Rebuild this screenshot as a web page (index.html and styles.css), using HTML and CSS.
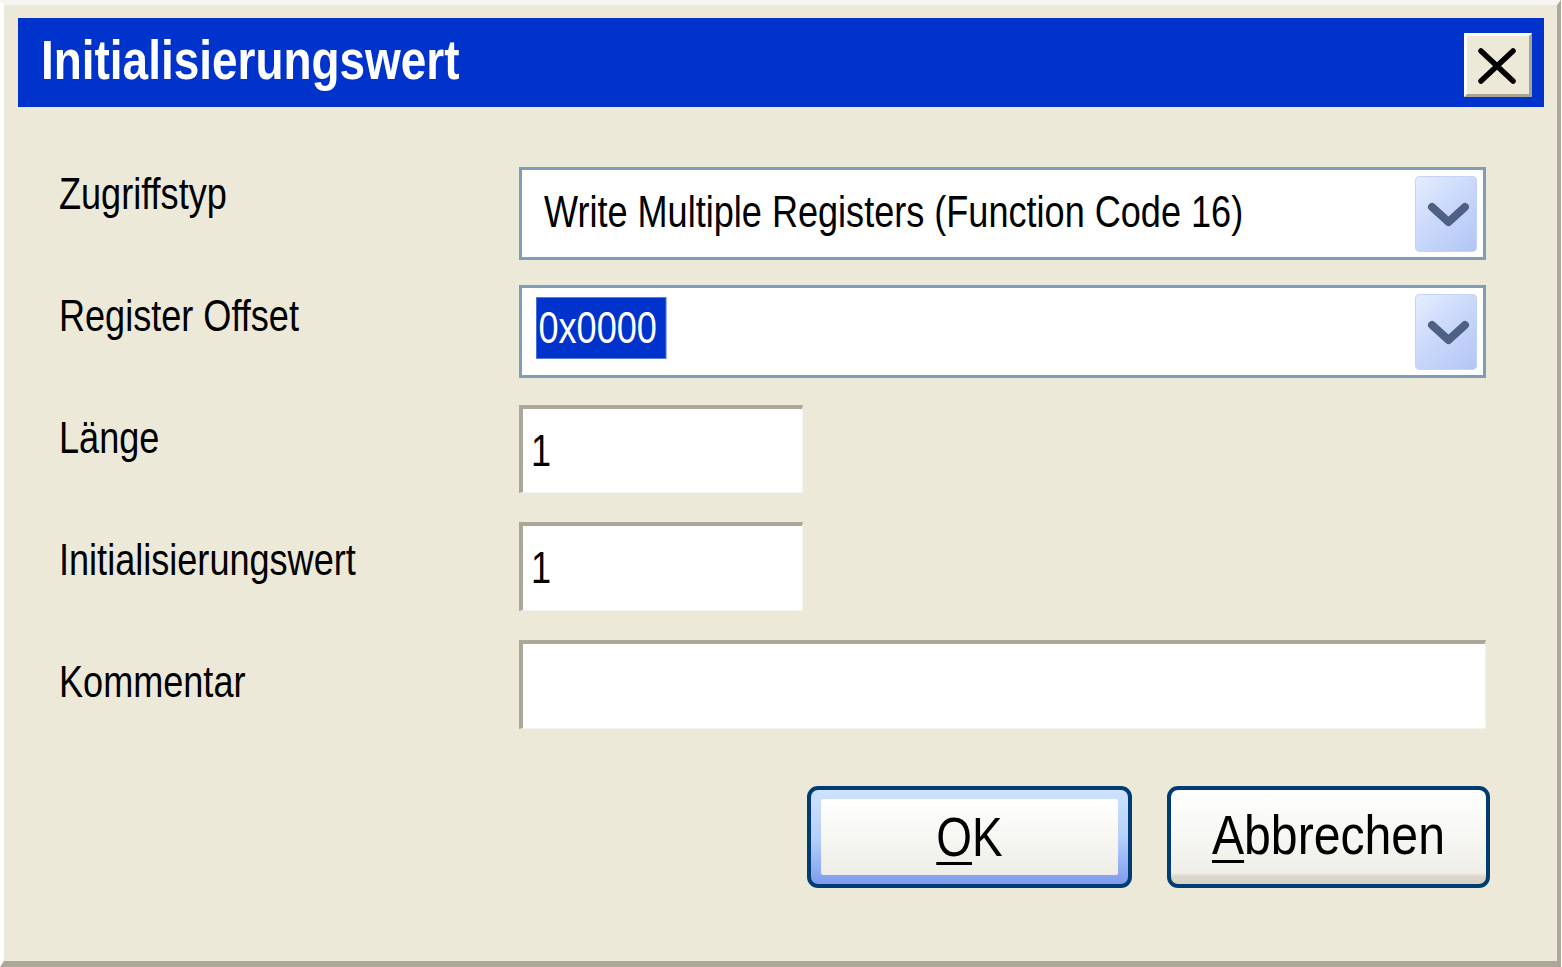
FILE: index.html
```html
<!DOCTYPE html>
<html lang="de">
<head>
<meta charset="utf-8">
<title>Initialisierungswert</title>
<link rel="stylesheet" href="styles.css">
</head>
<body>
<div class="window">
  <div class="titlebar">
    <span class="title n">Initialisierungswert</span>
    <button class="close" type="button" aria-label="Schließen">
      <svg width="68" height="64" viewBox="0 0 68 64"><path d="M17 18 L49 48 M49 18 L17 48" stroke="#000" stroke-width="5.5" stroke-linecap="round" fill="none"/></svg>
    </button>
  </div>
  <div class="form">
    <div class="labels">
      <div class="label"><span class="n">Zugriffstyp</span></div>
      <div class="label"><span class="n">Register Offset</span></div>
      <div class="label"><span class="n">Länge</span></div>
      <div class="label"><span class="n">Initialisierungswert</span></div>
      <div class="label"><span class="n">Kommentar</span></div>
    </div>
    <div class="fields">
      <div class="combo">
        <span class="combo-text"><span class="n">Write Multiple Registers (Function Code 16)</span></span>
        <span class="drop"><svg width="62" height="76" viewBox="0 0 62 76"><path d="M17 31 L33.5 46 L50 31" stroke="#4D6185" stroke-width="8" stroke-linecap="round" stroke-linejoin="round" fill="none"/></svg></span>
      </div>
      <div class="combo combo-2">
        <span class="combo-text sel-wrap"><span class="selected n">0x0000</span></span>
        <span class="drop"><svg width="62" height="76" viewBox="0 0 62 76"><path d="M17 31 L33.5 46 L50 31" stroke="#4D6185" stroke-width="8" stroke-linecap="round" stroke-linejoin="round" fill="none"/></svg></span>
      </div>
      <div class="input short r3"><span class="n">1</span></div>
      <div class="input short r4"><span class="n">1</span></div>
      <div class="input wide r5"></div>
    </div>
  </div>
  <div class="actions">
    <button class="btn btn-default" type="button"><span class="face"><span class="n c"><u>O</u>K</span></span></button>
    <button class="btn" type="button"><span class="face"><span class="n c wider"><u>A</u>bbrechen</span></span></button>
  </div>
</div>
</body>
</html>
```
FILE: styles.css
```css
html, body {
  margin: 0;
  padding: 0;
  background: #ffffff;
}
body {
  width: 1562px;
  height: 967px;
  overflow: hidden;
  font-family: "Liberation Sans", Arial, sans-serif;
  color: #000;
}
/* screen font is a narrow (Arial Narrow–like) face */
.n {
  display: inline-block;
  white-space: nowrap;
  transform: scaleX(0.82);
  transform-origin: 0 50%;
}
.n.c {
  transform-origin: 50% 50%;
}
.n.wider {
  transform: scaleX(0.86);
}
.window {
  box-sizing: border-box;
  width: 1561px;
  height: 967px;
  background: #ECE9D8;
  border-left: 4px solid #ffffff;
  border-top: 5px solid #F6F5EF;
  border-right: 4px solid #ACA899;
  border-bottom: 6px solid #ACA899;
  padding: 13px 13px 0 14px;
  display: flex;
  flex-direction: column;
}
.titlebar {
  height: 89px;
  background: #0033CC;
  display: flex;
  align-items: center;
  justify-content: space-between;
  padding: 0 12px 0 23px;
}
.title {
  color: #fff;
  font-weight: bold;
  font-size: 56px;
  line-height: 56px;
  margin-top: -5px;
}
.close {
  box-sizing: border-box;
  width: 68px;
  height: 64px;
  margin-top: 5px;
  padding: 0;
  background: #ECE9D8;
  border-top: 3px solid #ffffff;
  border-left: 3px solid #ffffff;
  border-right: 3px solid #A7A493;
  border-bottom: 3px solid #A7A493;
  display: flex;
  align-items: center;
  justify-content: center;
}
.close svg {
  display: block;
  flex: none;
}
.form {
  display: flex;
  padding: 0 58px 0 41px;
}
.labels {
  width: 460px;
  display: flex;
  flex-direction: column;
  gap: 78px;
  margin-top: 65px;
}
.label {
  font-size: 44px;
  line-height: 44px;
  height: 44px;
  white-space: nowrap;
}
.fields {
  flex: 1;
  display: flex;
  flex-direction: column;
  margin-top: 60px;
}
.combo {
  box-sizing: border-box;
  height: 93px;
  border: 3px solid #7F9DB9;
  background: #fff;
  display: flex;
  align-items: center;
  padding: 0 6px 0 22px;
}
.combo-2 {
  margin-top: 25px;
  padding-left: 14px;
}
.combo-text {
  flex: 1;
  font-size: 44px;
  line-height: 44px;
  white-space: nowrap;
  margin-top: -3px;
}
.sel-wrap {
  align-self: flex-start;
  padding-top: 9px;
  margin-top: 0;
}
.selected {
  background: #0033CC;
  color: #fff;
  line-height: 62px;
  height: 62px;
  padding: 0 12px 0 3px;
  box-shadow: inset 0 0 0 1px #5B7BE0;
}
.drop {
  width: 62px;
  height: 76px;
  border-radius: 5px;
  background: linear-gradient(135deg, #E6EEFF 0%, #CBD9FB 45%, #B1C5F5 100%);
  box-shadow: inset 0 0 0 1px #C4D3F8;
  display: flex;
}
.drop svg {
  display: block;
}
.input {
  box-sizing: border-box;
  background: #fff;
  border-top: 4px solid #ACA899;
  border-left: 4px solid #ACA899;
  border-right: 1px solid #F4F3EE;
  border-bottom: 1px solid #F4F3EE;
  font-size: 44px;
  line-height: 44px;
  display: flex;
  align-items: center;
  padding: 0 0 0 8px;
}
.short {
  width: 284px;
}
.r3 {
  margin-top: 27px;
  height: 88px;
}
.r4 {
  margin-top: 29px;
  height: 89px;
}
.r5 {
  margin-top: 29px;
  height: 89px;
}
.actions {
  display: flex;
  justify-content: flex-end;
  gap: 35px;
  margin-top: 57px;
  padding-right: 54px;
}
.btn {
  box-sizing: border-box;
  width: 323px;
  height: 102px;
  padding: 0;
  border: 4px solid #003C74;
  border-radius: 11px;
  background: linear-gradient(#FFFFFF 0%, #F8F8F5 40%, #EFEEE8 88%, #DCD7CB 92%, #D6D0C5 100%);
  display: flex;
  font-family: inherit;
  color: #000;
}
.btn .face {
  flex: 1;
  display: flex;
  align-items: center;
  justify-content: center;
  font-size: 56px;
  line-height: 56px;
  margin-top: -4px;
}
.btn u {
  text-decoration-thickness: 3px;
  text-underline-offset: 6px;
}
.btn-default {
  width: 325px;
  background: linear-gradient(#CEE2FE 0%, #B7CFFB 50%, #7F9CEE 100%);
}
.btn-default .face {
  margin: 9px 10px;
  border-radius: 2px;
  background: linear-gradient(#FFFFFF 0%, #F8F8F5 40%, #EEEDE7 100%);
}
```
